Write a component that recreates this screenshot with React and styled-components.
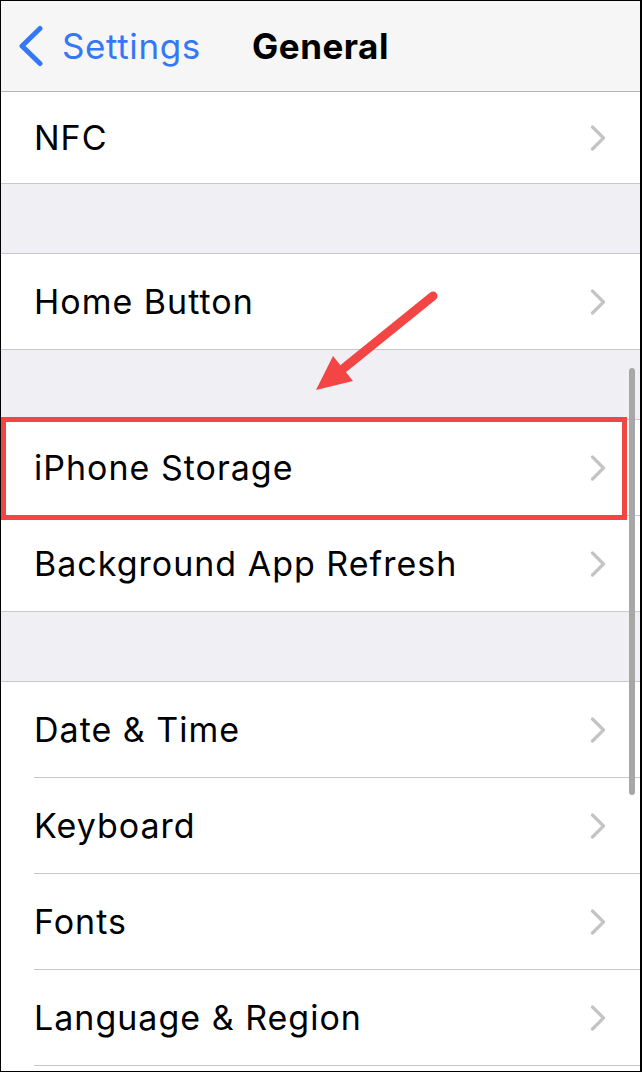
import React from "react";
import styled, { createGlobalStyle } from "styled-components";

const GlobalStyle = createGlobalStyle`
  html, body {
    margin: 0;
    padding: 0;
    background: #fff;
  }
  body {
    font-family: Inter, "Noto Sans", sans-serif;
    -webkit-font-smoothing: antialiased;
  }
`;

const Screen = styled.div`
  position: relative;
  width: 642px;
  height: 1072px;
  box-sizing: border-box;
  border: 1px solid #000;
  border-right-width: 2px;
  overflow: hidden;
  background: #efeff4;
`;

const NavBar = styled.div`
  height: 90px;
  display: grid;
  grid-template-columns: 1fr auto 1fr;
  align-items: center;
  background: #f6f6f6;
  border-bottom: 1px solid #b4b4b4;
`;

const BackButton = styled.div`
  display: flex;
  align-items: center;
  gap: 18px;
  padding-left: 17px;
  color: #3478f6;
  font-size: 35px;
  letter-spacing: 0.6px;
`;

const Title = styled.div`
  font-size: 35px;
  font-weight: 700;
  letter-spacing: 0.5px;
  color: #000;
`;

const Gap = styled.div`
  height: 69px;
`;

const Group = styled.div`
  background: #fff;
  border-top: ${(p) => (p.$noTop ? "none" : "1px solid #c8c7cc")};
  border-bottom: 1px solid #c8c7cc;
`;

const Row = styled.div`
  position: relative;
  padding-left: 33px;
  background: #fff;

  &:last-child > div {
    border-bottom: none;
  }

  ${(p) =>
    p.$highlight &&
    `
    &::before {
      content: "";
      position: absolute;
      left: 0;
      right: 13px;
      top: -3px;
      bottom: -4px;
      border: 5px solid #f44545;
      z-index: 2;
    }
  `}
`;

const RowInner = styled.div`
  height: ${(p) => p.$h || 95}px;
  display: flex;
  align-items: center;
  justify-content: space-between;
  padding-right: 34px;
  border-bottom: 1px solid #c8c7cc;
`;

const Label = styled.span`
  font-size: 34px;
  color: #000;
  letter-spacing: 1px;
`;

const ScrollThumb = styled.div`
  position: absolute;
  left: 628px;
  top: 367px;
  width: 6px;
  height: 427px;
  border-radius: 3px;
  background: #a7a7a7;
  z-index: 3;
`;

const ArrowLayer = styled.svg`
  position: absolute;
  left: 299px;
  top: 279px;
  z-index: 4;
`;

const BackChevron = () => (
  <svg width="26" height="42" viewBox="0 0 26 42">
    <polyline
      points="22,3.5 4,21 22,38.5"
      fill="none"
      stroke="#3478f6"
      strokeWidth="5"
      strokeLinecap="round"
      strokeLinejoin="round"
    />
  </svg>
);

const Chevron = () => (
  <svg width="16" height="26" viewBox="0 0 16 26">
    <polyline
      points="2.5,2 13.5,13 2.5,24"
      fill="none"
      stroke="#c4c4c7"
      strokeWidth="3.2"
      strokeLinecap="round"
      strokeLinejoin="round"
    />
  </svg>
);

const Item = ({ label, h, highlight }) => (
  <Row $highlight={highlight}>
    <RowInner $h={h}>
      <Label>{label}</Label>
      <Chevron />
    </RowInner>
  </Row>
);

export default function App() {
  return (
    <>
      <GlobalStyle />
      <Screen>
        <NavBar>
          <BackButton>
            <BackChevron />
            <span>Settings</span>
          </BackButton>
          <Title>General</Title>
          <div />
        </NavBar>

        <Group $noTop>
          <Item label="NFC" h={91} />
        </Group>
        <Gap />
        <Group>
          <Item label="Home Button" />
        </Group>
        <Gap />
        <Group>
          <Item label="iPhone Storage" highlight />
          <Item label="Background App Refresh" />
        </Group>
        <Gap />
        <Group>
          <Item label="Date & Time" />
          <Item label="Keyboard" />
          <Item label="Fonts" />
          <Item label="Language & Region" />
          <Row>
            <RowInner />
          </Row>
        </Group>

        <ScrollThumb />
        <ArrowLayer width="150" height="120" viewBox="0 0 150 120">
          <line
            x1="133"
            y1="16"
            x2="44"
            y2="88"
            stroke="#f44545"
            strokeWidth="9"
            strokeLinecap="round"
          />
          <polygon points="16,110 33,76 53,101" fill="#f44545" />
        </ArrowLayer>
      </Screen>
    </>
  );
}
